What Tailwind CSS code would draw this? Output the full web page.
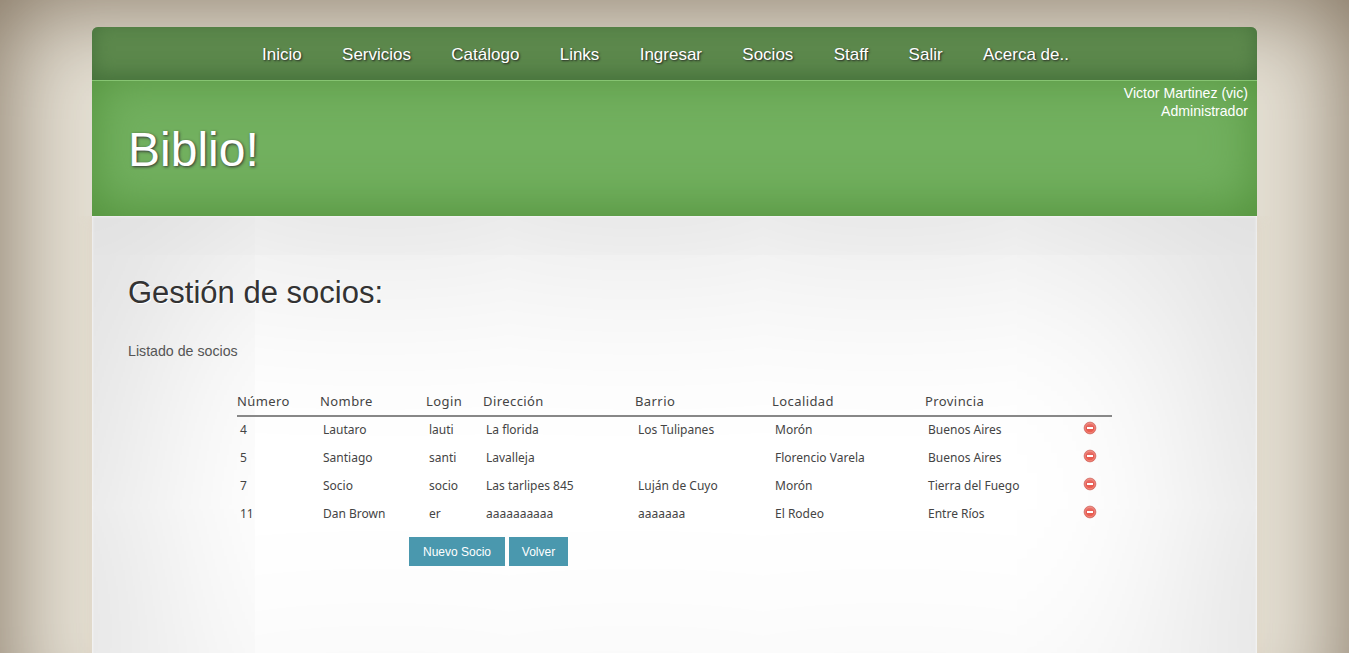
<!DOCTYPE html>
<html lang="es">
<head>
<meta charset="utf-8">
<title>Biblio!</title>
<script src="https://cdn.jsdelivr.net/npm/@tailwindcss/browser@4"></script>
</head>
<body class="h-[653px] overflow-hidden bg-white font-['Liberation_Sans',sans-serif]">
<svg class="absolute size-0">
  <defs>
    <linearGradient id="red" x1="0" y1="0" x2="0" y2="1"><stop offset="0" stop-color="#ee8278"/><stop offset=".5" stop-color="#e4574f"/><stop offset="1" stop-color="#f06552"/></linearGradient>
  </defs>
  <symbol id="remove" viewBox="0 0 14 14">
    <circle cx="7" cy="7" r="5.9" fill="url(#red)" stroke="#cf6f68" stroke-width=".8"/>
    <circle cx="7" cy="7" r="4.8" fill="none" stroke="#f4a097" stroke-width=".6"/>
    <rect x="4" y="6" width="6" height="2" fill="#fff"/>
  </symbol>
</svg>
<div class="h-[653px] overflow-clip">
<div class="h-[743px] w-[1349px] bg-[#e5e0d4] px-[92px] pt-[27px] shadow-[inset_0_0_100px_#7c6c58]">
  <div class="flex h-[716px] flex-col rounded-t-[6px]">
    <nav class="flex h-[53px] shrink-0 items-center justify-center gap-[40.3px] rounded-t-[6px] bg-[#5c884c] pr-[18px] pt-[2px] text-[17px] text-white shadow-[inset_0_-5px_20px_#44703a] [text-shadow:1px_1px_2px_#222]">
      <a>Inicio</a><a>Servicios</a><a>Catálogo</a><a>Links</a><a>Ingresar</a><a>Socios</a><a>Staff</a><a>Salir</a><a>Acerca de..</a>
    </nav>
    <header class="flex h-[136px] shrink-0 justify-between border-t border-[#86c472] bg-[#72b05f] pl-[36px] pr-[9px] text-white shadow-[inset_0_-6px_50px_#53923c]">
      <h1 class="mt-[41px] text-[48px] leading-[56px] [text-shadow:1px_1px_3px_#333]">Biblio!</h1>
      <div class="mt-[3px] text-right text-[14.1px] leading-[18px]">Victor Martinez (vic)<br>Administrador</div>
    </header>
    <main class="h-[527px] bg-white px-[36px] shadow-[inset_0_0_3px_#fff,inset_0_0_220px_#c6c6c6,0_0_14px_rgba(218,195,168,0.3)] [clip-path:inset(0_-20px_0_-20px)]">
      <h2 class="pt-[59px] text-[31px] leading-[36px] text-[#333] [text-shadow:1px_1px_0_#fff]">Gestión de socios:</h2>
      <p class="mt-[31px] text-[14.2px] leading-[18px] text-[#555]">Listado de socios</p>
      <table class="ml-[109px] mt-[26px] w-[875px] table-fixed border-collapse text-left font-['Noto_Sans','Open_Sans',sans-serif] text-[12px] text-[#444]">
        <colgroup><col class="w-[83px]"><col class="w-[106px]"><col class="w-[57px]"><col class="w-[152px]"><col class="w-[137px]"><col class="w-[153px]"><col class="w-[155px]"><col class="w-[32px]"></colgroup>
        <thead><tr class="h-[30px] border-b-2 border-[#888] text-[13px] tracking-[0.42px] [&>th]:pb-0 [&>th]:pt-[2px] [&>th]:font-normal"><th>Número</th><th>Nombre</th><th>Login</th><th>Dirección</th><th>Barrio</th><th>Localidad</th><th>Provincia</th><th></th></tr></thead>
        <tbody class="[&_td]:h-[28px] [&_td]:py-0 [&_td]:pl-[3px] [&_svg]:mb-[5px] [&_svg]:size-[14px]">
          <tr class="[&>td]:pb-[2px]!"><td>4</td><td>Lautaro</td><td>lauti</td><td>La florida</td><td>Los Tulipanes</td><td>Morón</td><td>Buenos Aires</td><td><svg class="translate-y-px"><use href="#remove"/></svg></td></tr>
          <tr><td>5</td><td>Santiago</td><td>santi</td><td>Lavalleja</td><td></td><td>Florencio Varela</td><td>Buenos Aires</td><td><svg><use href="#remove"/></svg></td></tr>
          <tr><td>7</td><td>Socio</td><td>socio</td><td>Las tarlipes 845</td><td>Luján de Cuyo</td><td>Morón</td><td>Tierra del Fuego</td><td><svg><use href="#remove"/></svg></td></tr>
          <tr><td>11</td><td>Dan Brown</td><td>er</td><td>aaaaaaaaaa</td><td>aaaaaaa</td><td>El Rodeo</td><td>Entre Ríos</td><td><svg><use href="#remove"/></svg></td></tr>
        </tbody>
      </table>
      <div class="ml-[281px] mt-[9px] flex gap-1 text-[12px] text-white">
        <button class="h-[29px] w-[96px] bg-[#4a98ae]">Nuevo Socio</button>
        <button class="h-[29px] w-[59px] bg-[#4a98ae]">Volver</button>
      </div>
    </main>
  </div>
</div>
</div>
</body>
</html>
